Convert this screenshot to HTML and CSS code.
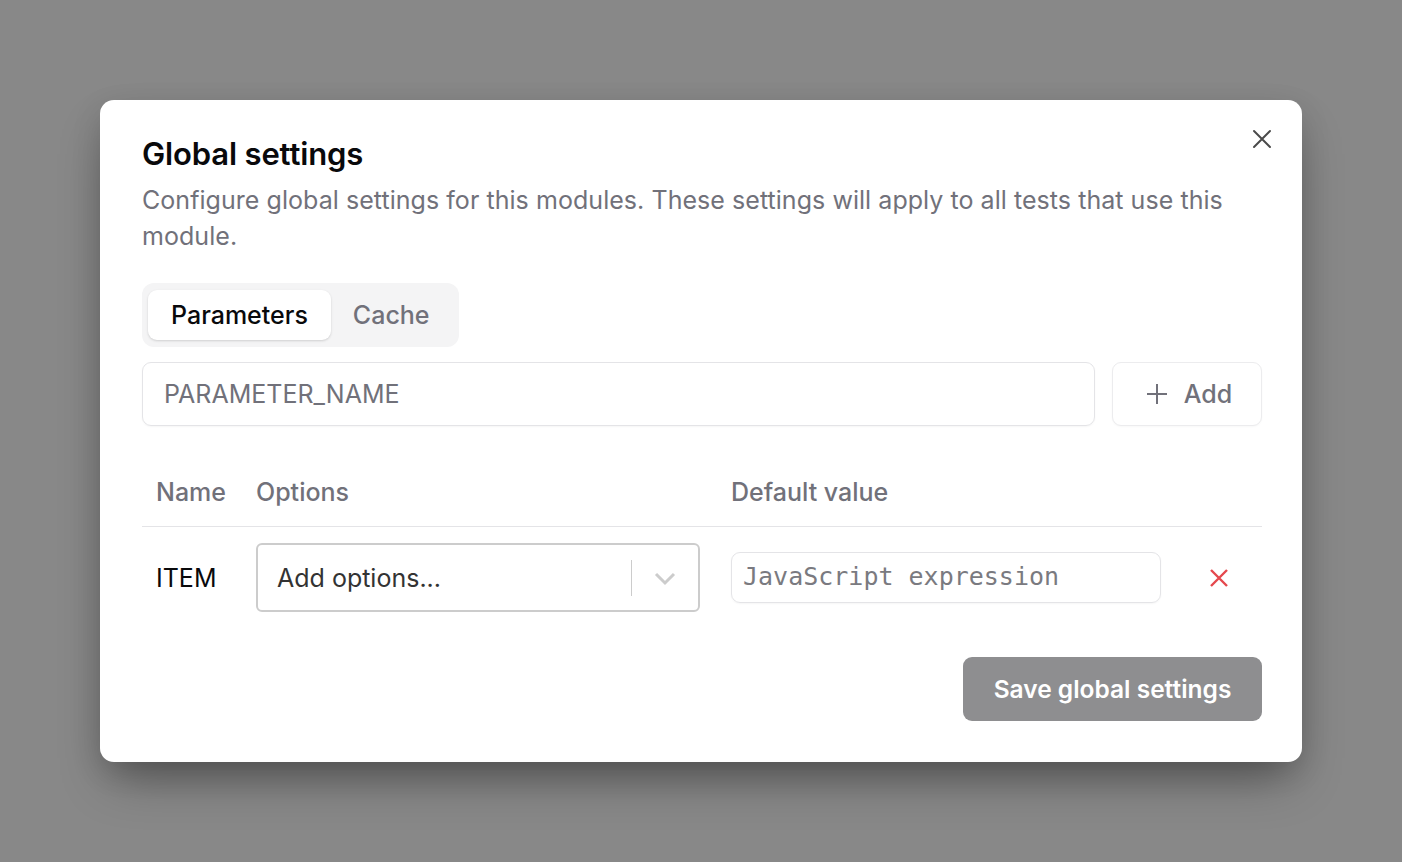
FILE: index.html
```html
<!DOCTYPE html>
<html lang="en">
<head>
<meta charset="utf-8">
<title>Global settings</title>
<link rel="stylesheet" href="styles.css">
</head>
<body>
<div class="overlay">
  <div class="modal">
    <button class="close" aria-label="Close">
      <svg width="20" height="20" viewBox="0 0 20 20"><path d="M2 2L18 18M18 2L2 18" stroke="#4a4a4a" stroke-width="2" stroke-linecap="round" fill="none"/></svg>
    </button>
    <h1 class="title">Global settings</h1>
    <p class="desc">Configure global settings for this modules. These settings will apply to all tests that use this module.</p>
    <div class="tabs">
      <div class="tab active">Parameters</div>
      <div class="tab">Cache</div>
    </div>
    <div class="add-row">
      <div class="param-input">PARAMETER_NAME</div>
      <button class="add-btn">
        <svg width="22" height="22" viewBox="0 0 22 22"><path d="M11 1V21M1 11H21" stroke="#71717a" stroke-width="2" fill="none"/></svg>
        <span>Add</span>
      </button>
    </div>
    <div class="table">
      <div class="th">Name</div>
      <div class="th">Options</div>
      <div class="th">Default value</div>
      <div class="th"></div>
      <div class="td name">ITEM</div>
      <div class="td">
        <div class="select">
          <span class="select-text">Add options...</span>
          <span class="sep"></span>
          <span class="chev">
            <svg width="22" height="14" viewBox="0 0 22 14"><path d="M2 2L11 11L20 2" stroke="#cccccc" stroke-width="3" fill="none"/></svg>
          </span>
        </div>
      </div>
      <div class="td">
        <div class="js-input">JavaScript expression</div>
      </div>
      <div class="td del">
        <svg width="20" height="20" viewBox="0 0 20 20"><path d="M2 2L18 18M18 2L2 18" stroke="#e5484d" stroke-width="2.4" fill="none"/></svg>
      </div>
    </div>
    <div class="footer">
      <button class="save">Save global settings</button>
    </div>
  </div>
</div>
</body>
</html>
```

FILE: styles.css
```css
* { box-sizing: border-box; }
html, body { margin: 0; padding: 0; }
body {
  background: #888888;
  font-family: Inter, "Noto Sans", sans-serif;
  width: 1402px;
  height: 862px;
  overflow: hidden;
}
.overlay {
  padding: 100px 100px 0 100px;
}
.modal {
  position: relative;
  width: 1202px;
  height: 662px;
  background: #ffffff;
  border-radius: 14px;
  padding: 36px 40px 41px 42px;
  box-shadow: 0 25px 50px -12px rgba(0,0,0,0.4), 0 10px 30px rgba(0,0,0,0.12);
}
.close {
  position: absolute;
  right: 30px;
  top: 29px;
  width: 20px;
  height: 20px;
  padding: 0;
  border: none;
  background: none;
  display: flex;
}
.title {
  margin: 0;
  font-size: 31px;
  line-height: 36px;
  font-weight: 600;
  color: #09090b;
  letter-spacing: -0.15px;
}
.desc {
  margin: 10px 0 0;
  font-size: 25px;
  line-height: 36px;
  color: #71717a;
  width: 1115px;
  letter-spacing: 0.05px;
}
.tabs {
  margin-top: 29px;
  display: inline-flex;
  background: #f4f4f5;
  border-radius: 12px;
  padding: 7px 6px;
  height: 64px;
}
.tab {
  height: 50px;
  display: flex;
  align-items: center;
  padding: 0 23px 0 22px;
  font-size: 25px;
  font-weight: 500;
  color: #71717a;
  border-radius: 9px;
}
.tab.active {
  padding: 0 23px 0 23px;
  background: #ffffff;
  color: #09090b;
  box-shadow: 0 1px 3px rgba(0,0,0,0.1), 0 1px 2px rgba(0,0,0,0.06);
}
.add-row {
  margin-top: 15px;
  display: flex;
  gap: 17px;
  width: 1120px;
}
.param-input {
  flex: 1;
  height: 64px;
  border: 1px solid #e4e4e7;
  border-radius: 9px;
  display: flex;
  align-items: center;
  padding-left: 21px;
  font-size: 25px;
  color: #71717a;
  box-shadow: 0 1px 2px rgba(0,0,0,0.04);
}
.add-btn {
  width: 150px;
  height: 64px;
  border: 1px solid #ececee;
  border-radius: 9px;
  background: #ffffff;
  display: flex;
  align-items: center;
  justify-content: center;
  gap: 16px;
  font-family: inherit;
  font-size: 25px;
  font-weight: 500;
  color: #71717a;
  padding: 0 0 0 4px;
  box-shadow: 0 1px 2px rgba(0,0,0,0.03);
}
.table {
  margin-top: 34px;
  width: 1120px;
  display: grid;
  grid-template-columns: 99px 475px 460px 86px;
}
.th {
  height: 67px;
  border-bottom: 1px solid #e4e4e7;
  display: flex;
  align-items: center;
  padding: 0 0 2px 15px;
  font-size: 25px;
  font-weight: 500;
  color: #71717a;
}
.th:first-child { padding-left: 14px; }
.td {
  height: 101px;
  display: flex;
  align-items: center;
  padding: 0 0 0 15px;
  font-size: 25px;
  color: #09090b;
}
.td.name { padding-left: 14px; }
.select {
  width: 444px;
  height: 69px;
  border: 2px solid #cccccc;
  border-radius: 6px;
  display: flex;
  align-items: center;
}
.select-text {
  flex: 1;
  padding-left: 19px;
  font-size: 25px;
  color: #333333;
}
.sep {
  width: 1.5px;
  height: 36px;
  background: #cccccc;
}
.chev {
  width: 66px;
  display: flex;
  justify-content: center;
  padding-top: 2px;
}
.js-input {
  width: 430px;
  height: 51px;
  border: 1px solid #e4e4e7;
  border-radius: 9px;
  display: flex;
  align-items: center;
  padding: 0 0 2px 11px;
  font-family: "DejaVu Sans Mono", "Liberation Mono", monospace;
  font-size: 25px;
  color: #7a7a80;
  box-shadow: 0 1px 2px rgba(0,0,0,0.04);
}
.td.del {
  justify-content: center;
  padding-left: 0;
}
.footer {
  margin-top: 29px;
  width: 1120px;
  display: flex;
  justify-content: flex-end;
}
.save {
  width: 299px;
  height: 64px;
  border: none;
  border-radius: 9px;
  background: #8e8e90;
  color: #ffffff;
  font-family: inherit;
  font-size: 24.5px;
  font-weight: 600;
  padding: 0;
}
```
